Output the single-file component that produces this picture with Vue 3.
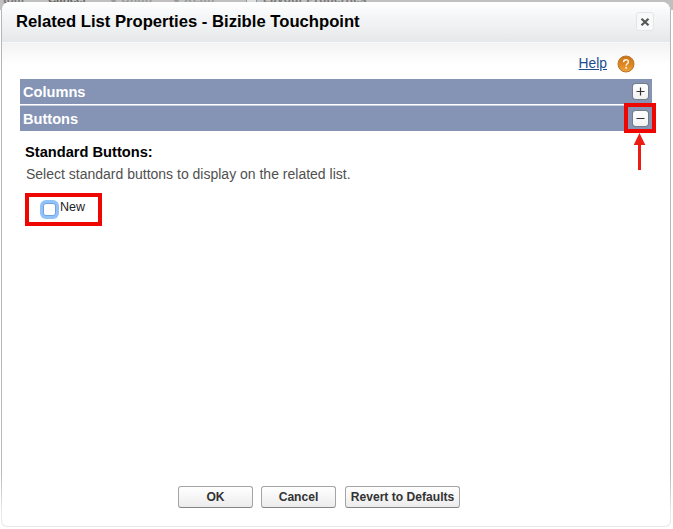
<script setup>
import { ref } from 'vue'
const columnsOpen = ref(false)
const buttonsOpen = ref(true)
const showNew = ref(false)
</script>

<template>
  <div class="page">
    <div class="toolbar">
      <span class="t1">tom</span><span class="t2">Cancel</span><span class="t3">● Undo</span><span class="t4">● Redo</span><i class="prop-icon"></i><span class="t5">Layout Properties</span>
    </div>
    <section class="dialog">
      <header class="head">
        <h1>Related List Properties - Bizible Touchpoint</h1>
        <button class="close" aria-label="Close">
          <svg width="10" height="10" viewBox="0 0 10 10"><path d="M1.5 1.8 L8.5 8.2 M8.5 1.8 L1.5 8.2" stroke="#555" stroke-width="2.2" /></svg>
        </button>
      </header>
      <div class="body">
        <div class="help">
          <a>Help</a>
          <svg width="18" height="18" viewBox="0 0 18 18">
            <defs><linearGradient id="orb" x1="0" y1="0" x2="0" y2="1"><stop offset="0" stop-color="#c8761c" /><stop offset=".5" stop-color="#dc8420" /><stop offset="1" stop-color="#f0a43c" /></linearGradient></defs>
            <circle cx="9" cy="9" r="8" fill="url(#orb)" stroke="#b8742c" stroke-width="1" />
            <path d="M6.6 7.2 C6.6 3.9 11.5 4 11.4 7 C11.3 8.8 9.1 8.8 9.1 10.7" fill="none" stroke="#fff3dc" stroke-width="1.5" />
            <circle cx="9.1" cy="12.8" r="1" fill="#fff3dc" />
          </svg>
        </div>
        <div class="bar" @click="columnsOpen = !columnsOpen">
          <h2 class="columns">Columns</h2>
          <span class="toggle"><svg width="15" height="15" viewBox="0 0 15 15"><path :d="columnsOpen ? 'M3.5 7.5H11.5' : 'M3.5 7.5H11.5M7.5 3.5V11.5'" stroke="#333" stroke-width="1.2" /></svg></span>
        </div>
        <div class="bar second" @click="buttonsOpen = !buttonsOpen">
          <h2 class="buttons">Buttons</h2>
          <span class="toggle"><svg width="15" height="15" viewBox="0 0 15 15"><path :d="buttonsOpen ? 'M3.5 7.5H11.5' : 'M3.5 7.5H11.5M7.5 3.5V11.5'" stroke="#333" stroke-width="1.2" /></svg></span>
          <div class="callout">
            <svg class="arrow" width="14" height="38" viewBox="0 0 14 38"><path d="M7.5 0 L13.3 12 H9 V37 H6 V12 H1.7 Z" fill="#ed1c12" /></svg>
          </div>
        </div>
        <div v-if="buttonsOpen" class="content">
          <h3>Standard Buttons:</h3>
          <p>Select standard buttons to display on the related list.</p>
          <label class="option"><input v-model="showNew" type="checkbox" /><span>New</span></label>
        </div>
      </div>
      <footer class="actions">
        <button class="btn ok">OK</button>
        <button class="btn cancel">Cancel</button>
        <button class="btn revert">Revert to Defaults</button>
      </footer>
    </section>
  </div>
</template>

<style>
body { overflow: hidden; background: #fff; }
</style>

<style scoped>
.page { position: relative; box-sizing: border-box; width: 673px; height: 529px; padding: 2px 2px 3px; background: #fff; font-family: "Liberation Sans", Arial, sans-serif; overflow: hidden; }
.page::before { content: ""; position: absolute; left: 1px; top: 0; width: 670px; height: 527px; border-radius: 0 0 6px 6px; background: linear-gradient(#b5b5b5, #b8babb 90%, #e8e8e8 97%); }
.toolbar { position: absolute; left: 0; top: 0; width: 673px; height: 10px; overflow: hidden; background: #c0c0c0; color: #777; font-size: 11.5px; font-weight: bold; line-height: 12px; white-space: pre; }
.toolbar span, .prop-icon { position: absolute; top: -7px; }
.toolbar .t1 { left: 3px; }
.toolbar .t2 { left: 48px; color: #666; }
.toolbar .t3 { left: 110px; color: #999; letter-spacing: .5px; }
.toolbar .t4 { left: 173px; color: #999; letter-spacing: .5px; }
.toolbar .t5 { left: 263px; letter-spacing: .35px; }
.prop-icon { left: 246px; width: 9px; height: 9px; border: 1px solid #8595a8; background: #ddd; }
.dialog { position: relative; display: flex; flex-direction: column; box-sizing: border-box; width: 668px; height: 524px; border-radius: 8px 8px 5px 5px; background: #fff; overflow: hidden; }
.head { display: flex; flex: none; justify-content: space-between; align-items: flex-start; box-sizing: border-box; height: 40px; padding: 10px 16px 0 14px; background: linear-gradient(#fff, #f5f6f7 35%, #e5e8ea); }
h1, h2, h3, p { margin: 0; white-space: nowrap; }
h1 { font-size: 16.65px; line-height: 19px; color: #000; }
.close { display: flex; align-items: center; justify-content: center; width: 18px; height: 19px; padding: 0; border: 1px solid #e3e6e7; border-radius: 3px; background: #f8f9f9; }
.body { flex: 1; padding: 11px 18px 0; background: linear-gradient(#f3f3f3, #fff 22px); border-top: 1px solid #f8f8f8; }
.help { display: flex; justify-content: flex-end; align-items: center; height: 19px; margin-bottom: 6px; padding-right: 17px; gap: 10px; }
.help a { font-size: 13.8px; line-height: 18px; color: #1b4b8d; text-decoration: underline; }
.bar { position: relative; display: flex; justify-content: space-between; align-items: center; box-sizing: border-box; width: 632px; height: 25px; padding: 0 4px 0 3px; background: #8594b5; }
.second { margin-top: 2px; box-shadow: 0 -1px #c9cfde; }
.bar h2 { font-size: 14.6px; line-height: 18px; color: #fff; }
.toggle { display: flex; width: 15px; height: 15px; border-radius: 3px; background: linear-gradient(#fff, #f1f1f1); box-shadow: 0 0 0 1px #777c88; }
.callout { position: absolute; right: -4px; top: -3px; box-sizing: border-box; width: 32px; height: 30px; border: 4px solid #ee0600; }
.arrow { position: absolute; left: 4px; top: 26px; }
.content { padding: 12px 0 0 5px; }
h3 { font-size: 14.65px; line-height: 18px; color: #000; }
p { margin: 5px 0 0 1px; font-size: 14px; line-height: 17px; color: #505050; }
.option { display: flex; align-items: flex-start; box-sizing: border-box; width: 77px; height: 33px; margin-top: 10px; padding: 5px 0 0 14px; border: 4px solid #ee0600; color: #222; font-size: 12.5px; line-height: 12px; }
.option input { appearance: none; box-sizing: border-box; width: 13px; height: 13px; margin: 1px 4px 0 0; border: 1px solid #6da4df; border-radius: 3px; background: #fff; box-shadow: 0 0 0 3px #91c3fa; }
.option span { margin-top: -1px; }
.actions { display: flex; flex: none; align-items: flex-start; height: 40px; padding-left: 176px; }
.btn { box-sizing: border-box; height: 22px; margin: 0; padding: 0; border: 1px solid #a4a4a4; border-bottom-color: #858585; border-radius: 3px; background: linear-gradient(#fff, #ececec); color: #333; font: bold 12.1px/20px "Liberation Sans", Arial, sans-serif; white-space: nowrap; }
.ok { width: 75px; }
.cancel { width: 75px; margin-left: 8px; }
.revert { width: 115px; margin-left: 9px; }
</style>
